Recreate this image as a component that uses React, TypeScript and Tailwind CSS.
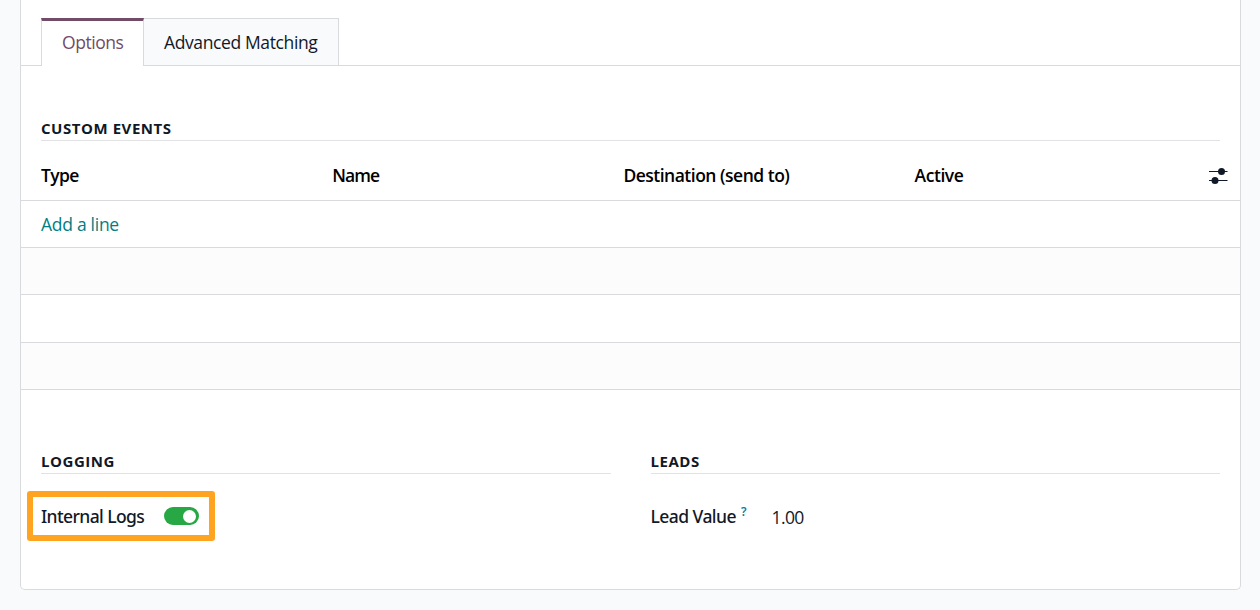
import React from "react";

const columns = [
  { label: "Type", className: "tracking-[-0.6px]" },
  { label: "Name", className: "tracking-[-0.9px]" },
  { label: "Destination (send to)", className: "tracking-[-0.5px]" },
  { label: "Active", className: "tracking-[-0.45px]" },
];

function SlidersIcon() {
  return (
    <svg width="20" height="18" viewBox="0 0 20 18" className="block text-[#111827]" aria-hidden="true">
      <path d="M1 4.5H19.5M1 13.5H19.5" stroke="currentColor" strokeWidth="1.2" />
      <circle cx="13.5" cy="4.5" r="3.5" fill="currentColor" />
      <circle cx="7" cy="13.5" r="3.5" fill="currentColor" />
    </svg>
  );
}

function SectionTitle({ children }: { children: React.ReactNode }) {
  return (
    <h2 className="flex h-[22px] items-center border-b border-[#e2e2e4] pb-[3px] text-[15px] font-bold leading-[18px] text-[#111827]">
      <span className="tracking-[0.55px]">{children}</span>
    </h2>
  );
}

export default function App() {
  return (
    <main className="h-[610px] overflow-hidden bg-[#f9fafc] pl-5 font-['Open_Sans','Noto_Sans',sans-serif] text-[17.5px] leading-6 text-[#111827]">
      <div className="h-[590px] w-[1221px] rounded-b-[5px] border border-t-0 border-[#d8dadd] bg-white">
        <nav className="flex h-[66px] items-end">
          <div className="h-px w-5 bg-[#d8dadd]" />
          <button className="h-12 w-[103px] border-x border-t-[3px] border-x-[#d8dadd] border-t-[#714b67] pb-1 pl-5 text-left text-[#714b67]">
            <span className="tracking-[-0.45px]">Options</span>
          </button>
          <button className="h-12 w-[195px] border-y border-r border-[#d8dadd] bg-[#f9fafc] pl-5 text-left">
            <span className="whitespace-nowrap tracking-[-0.38px]">Advanced Matching</span>
          </button>
          <div className="h-px flex-1 bg-[#d8dadd]" />
        </nav>

        <section className="pt-[53px]">
          <div className="px-5">
            <SectionTitle>CUSTOM EVENTS</SectionTitle>
          </div>
          <div className="flex h-[60px] items-center border-b border-[#d8dadd] pl-5 pt-[11px] font-semibold text-black">
            {columns.map((c) => (
              <div key={c.label} className="w-[291.2px] shrink-0 whitespace-nowrap pb-[2px]">
                <span className={c.className}>{c.label}</span>
              </div>
            ))}
            <div className="ml-[2px] shrink-0">
              <SlidersIcon />
            </div>
          </div>
          <div className="flex h-[47px] items-center border-b border-[#d8dadd] pl-5 text-[#017e84]">
            <span className="tracking-[-0.28px]">Add a line</span>
          </div>
          <div className="h-[47px] border-b border-[#d8dadd] bg-[#fcfcfc]" />
          <div className="h-12 border-b border-[#d8dadd]" />
          <div className="h-[47px] border-b border-[#d8dadd] bg-[#fcfcfc]" />
        </section>

        <div className="grid grid-cols-2 gap-x-10 px-5 pt-[62px]">
          <section>
            <SectionTitle>LOGGING</SectionTitle>
            <div className="-ml-[14px] mt-[17px] flex h-[50px] w-[188px] items-center rounded-[3px] border-[6px] border-[#ffa421] pl-2">
              <label className="w-[123px] whitespace-nowrap pb-px font-['Noto_Sans','Open_Sans',sans-serif] font-medium">
                <span className="tracking-[-0.6px]">Internal Logs</span>
              </label>
              <div className="flex h-[18px] w-[35px] items-center justify-end rounded-full bg-[#28a745] pr-[3px]">
                <div className="size-[13px] rounded-full bg-white" />
              </div>
            </div>
          </section>
          <section>
            <SectionTitle>LEADS</SectionTitle>
            <div className="mt-[17px] flex h-[50px] items-center">
              <label className="flex w-[121px] items-center whitespace-nowrap pb-px font-['Noto_Sans','Open_Sans',sans-serif] font-medium">
                <span className="tracking-[-0.55px]">Lead Value</span>
                <sup className="-top-1 ml-[5px] text-[12px] font-semibold leading-3 text-[#0180a5]">?</sup>
              </label>
              <span className="pt-px tracking-[-0.6px]">1.00</span>
            </div>
          </section>
        </div>
      </div>
    </main>
  );
}
